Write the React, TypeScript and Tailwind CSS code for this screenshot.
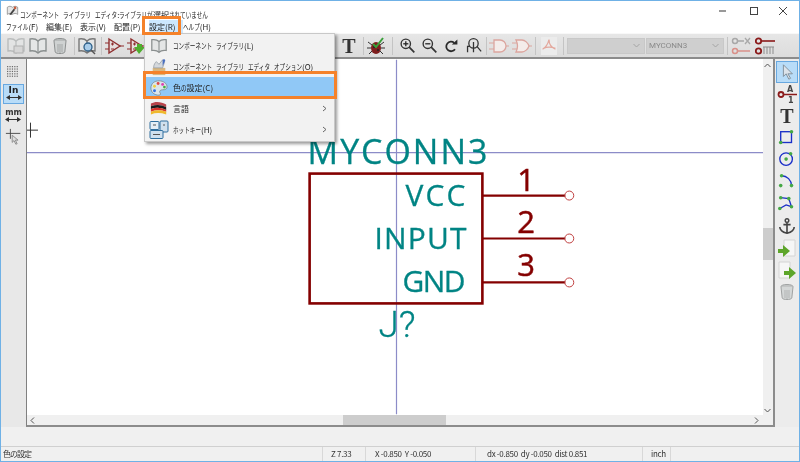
import type { ReactNode } from "react";

const jp = "font-['Noto_Sans_CJK_JP','Open_Sans',sans-serif]";

// kana in the original UI font is much narrower than kanji, so squeeze only the kana runs
function Jp({ text }: { text: string }) {
  return (
    <span className="text-[8px] leading-none text-[#222] whitespace-nowrap [word-spacing:2px]">
      {text.split(/([ぁ-んァ-ヶー]+)/).map((part, i) =>
        i % 2 === 1 ? (
          <span key={i} className="inline-block" style={{ width: part.length * 5.6 }}>
            <span className="inline-block origin-left scale-x-[0.7]">{part}</span>
          </span>
        ) : (
          <span key={i}>{part}</span>
        )
      )}
    </span>
  );
}

function Ico({ children, size = 20, className = "" }: { children: ReactNode; size?: number; className?: string }) {
  return (
    <svg width={size} height={size} viewBox="0 0 20 20" fill="none" className={className}>
      {children}
    </svg>
  );
}

function Slot({ children, className = "" }: { children?: ReactNode; className?: string }) {
  return <div className={`flex h-[22px] w-[22px] shrink-0 items-center justify-center ${className}`}>{children}</div>;
}

function Sep({ className = "" }: { className?: string }) {
  return <div className={`h-[18px] w-px shrink-0 bg-[#c4c4c4] ${className}`} />;
}

function Book({ color = "#8a8f8f", fill = "#e4e6e6" }: { color?: string; fill?: string }) {
  return (
    <>
      <path d="M10 5C8 3 5 2.500 2 3v12c3-.5 6 0 8 2 2-2 5-2.500 8-2V3c-3-.5-6 0-8 2z" fill={fill} stroke={color} strokeWidth="1.400" />
      <path d="M10 5v12" stroke={color} strokeWidth="1.200" />
    </>
  );
}

function Trash({ opacity = 1 }: { opacity?: number }) {
  return (
    <g opacity={opacity}>
      <ellipse cx="10" cy="4.500" rx="6" ry="2" fill="#b9bcbc" stroke="#8d9090" />
      <path d="M4 5l1.200 11c.5 2 9 2 9.600 0L16 5" fill="#cfd2d2" stroke="#8d9090" />
      <path d="M8 8v8M10 8v9M12 8v8" stroke="#a4a7a7" />
    </g>
  );
}

function Mag({ sign }: { sign?: "+" | "-" }) {
  return (
    <>
      <circle cx="8" cy="8" r="5.500" stroke="#333" strokeWidth="1.600" />
      <path d="M12 12l6 6" stroke="#333" strokeWidth="2" />
      {sign && <path d="M5 8h6" stroke="#222" strokeWidth="1.500" />}
      {sign === "+" && <path d="M8 5v6" stroke="#222" strokeWidth="1.500" />}
    </>
  );
}

function Gate({ or }: { or?: boolean }) {
  const c = "#dca59e";
  return (
    <>
      <path d={or ? "M4 4h6c3 0 6 3 7 6-1 3-4 6-7 6H4c2-4 2-8 0-12z" : "M5 4h6a6 6 0 0 1 0 12H5z"} fill="#f4ecea" stroke={c} strokeWidth="1.300" />
      <path d="M0 7h5M0 13h5M17 10h3" stroke={c} strokeWidth="1.200" />
    </>
  );
}

function Amp({ green }: { green?: boolean }) {
  const c = "#8f2f2f";
  return (
    <>
      <path d="M5 3l11 7-11 7z" fill="#e6dede" stroke={c} strokeWidth="1.400" />
      <path d="M1 7h4M1 13h4M16 10h4M7 8h3M8.500 6.500v3M7 13h3" stroke={c} strokeWidth="1.100" />
      {green && <path d="M11 8v3H8l5 7 6-7h-3V8z" fill="#4fae2e" />}
    </>
  );
}

function MenuRow({ icon, label, arrow, active }: { icon: ReactNode; label: string; arrow?: boolean; active?: boolean }) {
  return (
    <div className={`flex h-[21px] items-center ${active ? "bg-[#90c8f6]" : ""}`}>
      <div className="flex w-[28px] shrink-0 justify-center">{icon}</div>
      <Jp text={label} />
      {arrow && (
        <svg width="5" height="7" viewBox="0 0 5 7" fill="none" className="ml-auto mr-[7px]">
          <path d="M1 1l3 2.500L1 6" stroke="#666" />
        </svg>
      )}
    </div>
  );
}

function Palette() {
  return (
    <Ico size={18}>
      <path d="M10 2C5 2 1 5 1 10s4 8 9 8c2 0 2-2 1-3-1-2 1-3 3-3 3 0 5-1 5-3 0-4-4-7-9-7z" fill="#dbe5ea" stroke="#7e8f98" />
      <circle cx="5" cy="8" r="1.600" fill="#f0d040" />
      <circle cx="9" cy="5" r="1.600" fill="#e04848" />
      <circle cx="14" cy="6" r="1.600" fill="#e040b0" />
      <circle cx="5" cy="13" r="1.600" fill="#3070e0" />
      <circle cx="16" cy="9" r="1.500" fill="#40b040" />
    </Ico>
  );
}

function SettingsMenu() {
  return (
    <div className="absolute left-[143px] top-[32px] z-10 h-[109px] w-[191px] border border-[#c8c8c8] bg-[#f2f2f2] pt-[1px] shadow-[2px_2px_3px_rgba(0,0,0,0.4)]">
      <MenuRow
        label="コンポーネント ライブラリ(L)"
        icon={
          <Ico size={18}>
            <Book />
          </Ico>
        }
      />
      <MenuRow
        label="コンポーネント ライブラリ エディタ オプション(O)"
        icon={
          <Ico size={18}>
            <path d="M3 11h14v8H3z" fill="#d9b77e" />
            <path d="M4 11c0-4 2-6 3-7l3 3 4-5 2 3-2 6z" fill="#d4d8dc" stroke="#8e979e" strokeWidth="0.800" />
            <path d="M14 2l2-1 1 2-3 6z" fill="#4a6fc0" />
          </Ico>
        }
      />
      <MenuRow label="色の設定(C)" active icon={<Palette />} />
      <MenuRow
        label="言語"
        arrow
        icon={
          <Ico size={18}>
            <path d="M1 4c5-3 12-2 17 1v3C12 5 6 5 1 7z" fill="#b8434a" />
            <path d="M1 7c6-2 11-2 17 1v3C12 8 6 8 1 10z" fill="#1b1b1b" />
            <path d="M1 10c6-2 11-2 17 1v2C12 11 6 11 1 13z" fill="#d8342c" />
            <path d="M1 13c6-2 11-2 17 0v3C12 14 6 14 1 16z" fill="#efb92c" />
          </Ico>
        }
      />
      <MenuRow
        label="ホットキー(H)"
        arrow
        icon={
          <Ico size={20}>
            <rect x="1" y="1.500" width="9" height="8" rx="1" fill="#e4eef6" stroke="#2f6f9f" />
            <rect x="11" y="1" width="8" height="11" rx="1" fill="#cfe0ee" stroke="#2f6f9f" />
            <rect x="1" y="10.500" width="13" height="8" rx="1" fill="#cfe0ee" stroke="#2f6f9f" />
            <path d="M4 5h3M14 5h2M4 14.500h7" stroke="#555" />
          </Ico>
        }
      />
    </div>
  );
}

function TopToolbar() {
  return (
    <div className="flex h-[26px] items-center border-y border-b-2 border-t-[#f8f8f8] border-b-[#8c8c8c] bg-[linear-gradient(#e6e6e6,#dcdcdc)] pl-[4px]">
      <Slot>
        <Ico>
          <g opacity="0.55">
            <Book color="#9a9f9f" />
            <rect x="8" y="10" width="9" height="7" fill="#cfcfcf" stroke="#8a8a8a" />
          </g>
        </Ico>
      </Slot>
      <Slot>
        <Ico>
          <Book />
        </Ico>
      </Slot>
      <Slot>
        <Ico>
          <Trash />
        </Ico>
      </Slot>
      <Sep className="ml-[3px] mr-px" />
      <Slot>
        <Ico>
          <Book color="#777" />
          <circle cx="11" cy="11" r="4" fill="#a9cdea" stroke="#2c5f88" strokeWidth="1.300" />
          <path d="M14 14l4 4" stroke="#555" strokeWidth="1.500" />
        </Ico>
      </Slot>
      <Sep className="ml-[3px]" />
      <Slot className="ml-px">
        <Ico>
          <Amp />
        </Ico>
      </Slot>
      <Slot>
        <Ico>
          <Amp green />
        </Ico>
      </Slot>
      <div className="w-[191px] shrink-0" />
      <Slot>
        <span className="font-['Liberation_Serif',serif] text-[20px] font-bold leading-none text-[#333]">T</span>
      </Slot>
      <Sep className="ml-[3px] mr-px" />
      <Slot>
        <Ico>
          <ellipse cx="10" cy="12" rx="5" ry="6" fill="#7e1d1d" />
          <path d="M2 6l4 3M18 6l-4 3M1 12h4M19 12h-4M3 18l3-3M17 18l-3-3" stroke="#333" />
          <circle cx="8" cy="11" r="1" fill="#222" />
          <circle cx="12" cy="14" r="1" fill="#222" />
          <path d="M7 8l3 3 7-9" stroke="#3aa03a" strokeWidth="2" />
        </Ico>
      </Slot>
      <Sep className="ml-[5px] mr-[3px]" />
      <Slot>
        <Ico size={17}>
          <Mag sign="+" />
        </Ico>
      </Slot>
      <Slot>
        <Ico size={17}>
          <Mag sign="-" />
        </Ico>
      </Slot>
      <Slot>
        <Ico size={16}>
          <path d="M15 14a6 6 0 1 1-1-8" stroke="#2a2a2a" strokeWidth="2.200" />
          <path d="M11 8h7V2z" fill="#2a2a2a" />
        </Ico>
      </Slot>
      <Slot>
        <Ico size={17}>
          <circle cx="10" cy="7.500" r="5.500" stroke="#333" strokeWidth="1.500" />
          <path d="M14 11l5 6M10 6v12M3 18v-7h3" stroke="#333" strokeWidth="1.500" />
        </Ico>
      </Slot>
      <Sep className="ml-[2px] mr-px" />
      <Slot>
        <Ico>
          <Gate />
        </Ico>
      </Slot>
      <Slot className="ml-px">
        <Ico>
          <Gate or />
        </Ico>
      </Slot>
      <Sep className="ml-[2px] mr-[2px]" />
      <Slot>
        <div className="flex h-[18px] w-[16px] items-center justify-center bg-[#ececec]">
          <Ico size={16}>
            <path d="M10 2c-1 4-3 9-8 12M10 2c0 5 3 10 8 12M3 13c4-2 10-2 15 0" stroke="#e3a79c" strokeWidth="1.500" />
          </Ico>
        </div>
      </Slot>
      <Sep className="ml-[3px] mr-[3px]" />
      <div className="flex h-[16px] w-[78px] shrink-0 items-center justify-end border border-[#c8c8c8] bg-[#cfcfcf] pr-[4px]">
        <Chevron />
      </div>
      <div className="ml-px flex h-[16px] w-[78px] shrink-0 items-center justify-between border border-[#c8c8c8] bg-[#cfcfcf] pl-[2px] pr-[4px]">
        <span className="font-['Roboto',sans-serif] text-[8px] text-[#8a8a8a]">MYCONN3</span>
        <Chevron />
      </div>
      <Sep className="ml-[3px] mr-[2px]" />
      <Slot>
        <Ico>
          <circle cx="4" cy="5" r="2.500" stroke="#a8a8a8" strokeWidth="1.500" />
          <path d="M7 5h6M14 2l5 6M19 2l-5 6" stroke="#a8a8a8" strokeWidth="1.300" />
          <circle cx="4" cy="15" r="2.500" stroke="#d9918a" strokeWidth="1.500" />
          <path d="M7 15h12" stroke="#d9918a" strokeWidth="1.500" />
        </Ico>
      </Slot>
      <Slot className="ml-[2px]">
        <Ico>
          <circle cx="3.500" cy="5" r="2.700" stroke="#8b1a1a" strokeWidth="1.800" />
          <path d="M6 5h14" stroke="#8b1a1a" strokeWidth="1.600" />
          <circle cx="3.500" cy="15" r="2.700" stroke="#8b1a1a" strokeWidth="1.800" />
          <path d="M8 11h11M9 11v7M12 11v7M15 11v7M18 11v7" stroke="#8d8d8d" />
        </Ico>
      </Slot>
    </div>
  );
}

function Chevron() {
  return (
    <svg width="7" height="5" viewBox="0 0 7 5" fill="none">
      <path d="M.500 1l3 3 3-3" stroke="#a4a4a4" />
    </svg>
  );
}

function LeftToolbar() {
  return (
    <div className="flex w-[25px] shrink-0 flex-col items-center bg-[#e8e8e8] pt-[3px]">
      <Slot>
        <Ico size={16}>
          {[2, 5, 8, 11, 14].map((y) =>
            [2, 5, 8, 11, 14].map((x) => <rect key={`${x}-${y}`} x={x - 0.7} y={y - 0.7} width="1.500" height="1.500" fill="#666" />)
          )}
        </Ico>
      </Slot>
      <div className="flex h-[20px] w-[21px] shrink-0 flex-col items-center border border-[#68a8e0] bg-[#b8dcf8]">
        <span className="font-['DejaVu_Sans',sans-serif] text-[9px] font-bold leading-[10px] text-[#222]">In</span>
        <ArrowH />
      </div>
      <div className="flex h-[22px] shrink-0 flex-col items-center justify-center">
        <span className="font-['DejaVu_Sans',sans-serif] text-[8px] font-bold leading-[9px] text-[#333]">mm</span>
        <ArrowH />
      </div>
      <Slot>
        <Ico size={18}>
          <path d="M1 6h16M6 1v11" stroke="#444" />
          <path d="M8 8v8l2-2 2 4 1.500-.5-2-4h3z" fill="#ddd" stroke="#888" />
        </Ico>
      </Slot>
    </div>
  );
}

function ArrowH() {
  return (
    <svg width="16" height="5" viewBox="0 0 16 5" fill="#333">
      <path d="M1 2h14v1H1z" />
      <path d="M0 2.500L4 0v5zM16 2.500L12 0v5z" />
    </svg>
  );
}

function Dot({ x, y }: { x: number; y: number }) {
  return <circle cx={x} cy={y} r="2" fill="#45a845" />;
}

function RightToolbar() {
  const blue = "#1a2fc8";
  return (
    <div className="flex w-[24px] shrink-0 flex-col items-center bg-[#ececec] pt-[2px]">
      <Slot className="border border-[#68a8e0] bg-[#b8dcf8]">
        <Ico size={18}>
          <path d="M6 2v13l3-3 3 6 2-1-3-5h5z" fill="#dce3ea" stroke="#7d8b96" />
        </Ico>
      </Slot>
      <Slot>
        <Ico>
          <circle cx="4" cy="10.500" r="2.500" stroke="#8b1a1a" strokeWidth="1.800" />
          <path d="M6.500 10.500H20" stroke="#8b1a1a" strokeWidth="1.500" />
          <text x="10" y="7.500" fontSize="8" fontWeight="700" fill="#444" fontFamily="DejaVu Sans">A</text>
          <text x="11" y="18.500" fontSize="8" fontWeight="700" fill="#444" fontFamily="DejaVu Sans">1</text>
        </Ico>
      </Slot>
      <Slot>
        <span className="font-['Liberation_Serif',serif] text-[20px] font-bold leading-none text-[#333]">T</span>
      </Slot>
      <Slot>
        <Ico size={18}>
          <rect x="3" y="3" width="12" height="12" stroke={blue} strokeWidth="1.500" />
          <Dot x={15} y={3} />
          <Dot x={3} y={15} />
        </Ico>
      </Slot>
      <Slot>
        <Ico size={18}>
          <circle cx="9" cy="9" r="7" stroke={blue} strokeWidth="1.500" />
          <Dot x={9} y={9} />
          <Dot x={14} y={3} />
        </Ico>
      </Slot>
      <Slot>
        <Ico size={18}>
          <path d="M4 3c6 0 11 5 11 11" stroke={blue} strokeWidth="1.500" />
          <Dot x={4} y={3} />
          <Dot x={15} y={14} />
          <Dot x={3} y={14} />
        </Ico>
      </Slot>
      <Slot>
        <Ico size={18}>
          <path d="M3 3l9 1 3 9-6-2-7 4" stroke={blue} strokeWidth="1.500" />
          <Dot x={3} y={3} />
          <Dot x={12} y={4} />
          <Dot x={15} y={13} />
          <Dot x={2} y={15} />
        </Ico>
      </Slot>
      <Slot>
        <Ico size={18}>
          <circle cx="10" cy="4" r="2" stroke="#444" strokeWidth="1.600" />
          <path d="M10 6v12M6 8.500h8M2 11c0 4 4 6 8 7 4-1 8-3 8-7" stroke="#444" strokeWidth="1.800" />
        </Ico>
      </Slot>
      <Slot>
        <Ico>
          <path d="M7 2h11v16H7z" fill="#f6f6f6" stroke="#d4d4d4" />
          <path d="M1 11h5V7l7 6-7 6v-4H1z" fill="#5da52a" />
        </Ico>
      </Slot>
      <Slot>
        <Ico>
          <path d="M2 2h11v16H2z" fill="#f6f6f6" stroke="#d4d4d4" />
          <path d="M7 11h5V7l7 6-7 6v-4H7z" fill="#5da52a" />
        </Ico>
      </Slot>
      <Slot>
        <Ico>
          <Trash opacity={0.8} />
        </Ico>
      </Slot>
    </div>
  );
}

function Schematic() {
  const teal = "#008484";
  const red = "#840000";
  const font = "Open Sans";
  const label = (s: string, x: number, y: number, w: number, size: number, family = font, weight = 400) => (
    <text x={x} y={y} fontSize={size} fontFamily={family} fontWeight={weight} fill={teal} stroke={teal} strokeWidth="0.300" textLength={w} lengthAdjust="spacing">
      {s}
    </text>
  );
  const num = (s: string, x: number, y: number) => (
    <text x={x} y={y} fontSize="31" fontFamily={font} fill={red} stroke={red} strokeWidth="0.500">
      {s}
    </text>
  );
  return (
    <svg className="block h-full w-full" viewBox="27 59 737 355">
      <path d="M397 59v355M27 152h737" stroke="#8c8cc8" strokeWidth="1.200" />
      <path d="M30.500 122v15M25 129.500h13" stroke="#333" />
      <rect x="310" y="173" width="173" height="130" fill="none" stroke={red} strokeWidth="2.600" />
      <path d="M483 195h83M483 238h83M483 282h83" stroke={red} strokeWidth="2.200" />
      {[195, 238, 282].map((y) => (
        <circle key={y} cx="570" cy={y} r="4.500" fill="none" stroke="#c04040" />
      ))}
      {label("MYCONN3", 308, 163, 180, 34)}
      {label("VCC", 406, 205, 60, 30)}
      {label("INPUT", 375, 249, 92, 30)}
      {label("GND", 403, 292, 63, 30)}
      {label("J?", 379, 337, 37, 37, "Roboto", 300)}
      {num("1", 518, 190)}
      {num("2", 518, 233)}
      {num("3", 518, 276)}
    </svg>
  );
}

function Canvas() {
  return (
    <div className="flex min-w-0 flex-1 flex-col border-x border-l-[#808080] border-r-2 border-r-[#8c8c8c] border-b-2 border-b-[#8c8c8c] border-solid border-t-0">
      <div className="flex min-h-0 flex-1">
        <div className="min-w-0 flex-1 bg-white">
          <Schematic />
        </div>
        <div className="relative w-[10px] shrink-0 bg-[#f0f0f0]">
          <svg width="7" height="5" viewBox="0 0 7 5" fill="none" className="ml-[1px] mt-[4px]">
            <path d="M.500 4l3-3 3 3" stroke="#555" />
          </svg>
          <div className="absolute left-0 top-[169px] h-[32px] w-[10px] bg-[#cdcdcd]" />
          <svg width="7" height="5" viewBox="0 0 7 5" fill="none" className="absolute bottom-[2px] left-[1px]">
            <path d="M.500 1l3 3 3-3" stroke="#555" />
          </svg>
        </div>
      </div>
      <div className="relative flex h-[10px] shrink-0 items-center justify-between bg-[#f0f0f0] pl-[3px] pr-[14px]">
        <svg width="5" height="7" viewBox="0 0 5 7" fill="none">
          <path d="M4 .5l-3 3 3 3" stroke="#555" />
        </svg>
        <div className="absolute left-[316px] top-0 h-[10px] w-[103px] bg-[#cdcdcd]" />
        <svg width="5" height="7" viewBox="0 0 5 7" fill="none">
          <path d="M1 .5l3 3-3 3" stroke="#555" />
        </svg>
      </div>
    </div>
  );
}

function StatusCell({ children, className = "" }: { children?: ReactNode; className?: string }) {
  return <div className={`flex h-full shrink-0 items-center border-r border-[#d8d8d8] pl-[8px] ${className}`}>{children}</div>;
}

export default function App() {
  const menus = [
    ["ファイル(F)", "w-[41px] pl-[1px]"],
    ["編集(E)", "w-[34px]"],
    ["表示(V)", "w-[34px]"],
    ["配置(P)", "w-[35px]"],
    ["設定(R)", "w-[34px] bg-[#cce8ff]"],
    ["ヘルプ(H)", "w-[34px]"],
  ];
  return (
    <div className={`relative flex h-[462px] w-[800px] flex-col overflow-hidden border-x border-y border-[#6fb1e6] bg-[#f0f0f0] blur-[0.3px] ${jp}`}>
      <div className="flex h-[19px] shrink-0 items-center bg-white pl-[5px]">
        <Ico size={13}>
          <path d="M2 5c3-2 5-2 8 0 3-2 5-2 8 0v11c-3-2-5-2-8 0-3-2-5-2-8 0z" fill="#e6e6e6" stroke="#777" />
          <path d="M5 16l7-9 2 2-6 8z" fill="#444" />
          <circle cx="14" cy="6" r="2" fill="#c86040" />
        </Ico>
        <div className="ml-[1px]">
          <Jp text="コンポーネント ライブラリ エディタ:ライブラリが選択されていません" />
        </div>
        <div className="ml-auto flex items-center">
          <svg width="10" height="10" viewBox="0 0 10 10" fill="none">
            <path d="M0 5h7" stroke="#777" strokeWidth="1.500" />
          </svg>
          <svg width="10" height="10" viewBox="0 0 10 10" fill="none" className="ml-[20px]">
            <rect x="1.500" y="1.500" width="7" height="7" stroke="#444" />
          </svg>
          <svg width="10" height="10" viewBox="0 0 10 10" fill="none" className="ml-[19px] mr-[11px]">
            <path d="M1 1l8 8M9 1l-8 8" stroke="#444" />
          </svg>
        </div>
      </div>
      <div className="flex h-[13px] shrink-0 items-center bg-white pl-[4px]">
        {menus.map(([m, w]) => (
          <div key={m} className={`${w} flex h-full shrink-0 items-center`}>
            <Jp text={m} />
          </div>
        ))}
      </div>
      <TopToolbar />
      <div className="flex min-h-0 flex-1">
        <LeftToolbar />
        <Canvas />
        <RightToolbar />
      </div>
      <div className="h-[20px] shrink-0 border-b border-[#d0d0d0] bg-[#f0f0f0]" />
      <div className="flex h-[14px] shrink-0 items-center text-[8px] tracking-[-0.300px] text-[#333]">
        <div className="flex h-full w-[322px] shrink-0 items-center border-r border-[#d8d8d8] pl-[2px] tracking-[-1px]">色の設定</div>
        <StatusCell className="w-[43px]">Z 7.33</StatusCell>
        <StatusCell className="w-[110px] pl-[9px]">X -0.850&nbsp; Y -0.050</StatusCell>
        <StatusCell className="w-[167px] pl-[11px]">dx -0.850&nbsp; dy -0.050&nbsp; dist 0.851</StatusCell>
        <StatusCell className="w-[28px] pl-[2px]">inch</StatusCell>
      </div>
      <SettingsMenu />
      <div className="pointer-events-none absolute left-[141px] top-[15px] z-20 h-[19px] w-[39px] border-[3px] border-[#f5822a]" />
      <div className="pointer-events-none absolute left-[142px] top-[70px] z-20 h-[28px] w-[194px] border-[3px] border-[#f5822a]" />
    </div>
  );
}
